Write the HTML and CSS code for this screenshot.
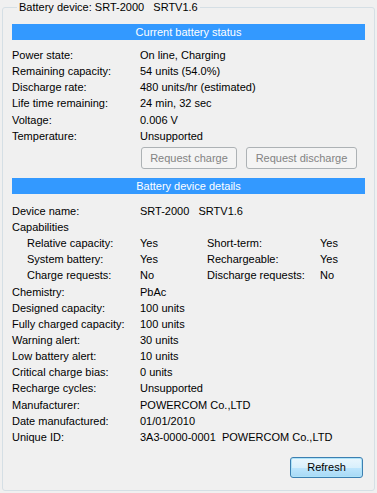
FILE: index.html
```html
<!DOCTYPE html>
<html lang="en">
<head>
    <meta charset="UTF-8">
    <title>Battery device</title>
    <link rel="stylesheet" href="styles.css">
</head>
<body>
    <fieldset class="device-box">
        <legend>Battery device: SRT-2000&nbsp;&nbsp;&nbsp;SRTV1.6</legend>

        <div class="section-title">Current battery status</div>
        <div class="rows status-rows">
            <span>Power state:</span><span>On line, Charging</span>
            <span>Remaining capacity:</span><span>54 units (54.0%)</span>
            <span>Discharge rate:</span><span>480 units/hr (estimated)</span>
            <span>Life time remaining:</span><span>24 min, 32 sec</span>
            <span>Voltage:</span><span>0.006 V</span>
            <span>Temperature:</span><span>Unsupported</span>
        </div>
        <div class="actions">
            <button class="btn" disabled>Request charge</button>
            <button class="btn btn-wide" disabled>Request discharge</button>
        </div>

        <div class="section-title">Battery device details</div>
        <div class="rows details-rows">
            <span>Device name:</span><span>SRT-2000&nbsp;&nbsp;&nbsp;SRTV1.6</span>
            <span class="full">Capabilities</span>
        </div>
        <div class="caps">
            <span>Relative capacity:</span><span>Yes</span>
            <span>Short-term:</span><span>Yes</span>
            <span>System battery:</span><span>Yes</span>
            <span>Rechargeable:</span><span>Yes</span>
            <span>Charge requests:</span><span>No</span>
            <span>Discharge requests:</span><span>No</span>
        </div>
        <div class="rows">
            <span>Chemistry:</span><span>PbAc</span>
            <span>Designed capacity:</span><span>100 units</span>
            <span>Fully charged capacity:</span><span>100 units</span>
            <span>Warning alert:</span><span>30 units</span>
            <span>Low battery alert:</span><span>10 units</span>
            <span>Critical charge bias:</span><span>0 units</span>
            <span>Recharge cycles:</span><span>Unsupported</span>
            <span>Manufacturer:</span><span>POWERCOM Co.,LTD</span>
            <span>Date manufactured:</span><span>01/01/2010</span>
            <span>Unique ID:</span><span>3A3-0000-0001&nbsp;&nbsp;POWERCOM Co.,LTD</span>
        </div>
        <div class="footer">
            <button class="btn btn-refresh">Refresh</button>
        </div>
    </fieldset>
</body>
</html>
```

FILE: styles.css
```css
* {
    box-sizing: border-box;
}

body {
    margin: 0;
    background: #f0f0f0;
    color: #000;
    font-family: "Liberation Sans", Arial, sans-serif;
    font-size: 11px;
    width: 377px;
    height: 493px;
    overflow: hidden;
}

.device-box {
    margin: 1px 2px 0 2px;
    padding: 10px 9px 12px 9px;
    border: 1px solid #d5dfe5;
    border-radius: 3px;
    height: 490px;
}

.device-box legend {
    padding: 0 2px;
    margin-left: 5px;
    line-height: 13px;
}

.section-title {
    background: #3399ff;
    color: #fff;
    text-align: center;
    height: 16px;
    line-height: 16px;
}

/* label / value pairs */
.rows {
    display: grid;
    grid-template-columns: 128px 1fr;
    grid-auto-rows: 16.15px;
    align-items: center;
}

.status-rows {
    margin-top: 7px;
}

.details-rows {
    margin-top: 9px;
}

.rows .full {
    grid-column: 1 / -1;
}

.caps {
    display: grid;
    grid-template-columns: 113px 67px 113px 1fr;
    grid-auto-rows: 16.15px;
    align-items: center;
    padding-left: 15px;
}

.actions {
    display: flex;
    gap: 9px;
    padding-left: 129px;
    margin-top: 3px;
    margin-bottom: 9px;
}

.btn {
    font-family: inherit;
    font-size: 11px;
    height: 22px;
    padding: 0 8px;
    border: 1px solid #adadad;
    border-radius: 3px;
    background: linear-gradient(#f2f2f2 0%, #ebebeb 50%, #dddddd 51%, #cfcfcf 100%);
    color: #000;
}

.btn:disabled {
    background: #f4f4f4;
    border-color: #adb2b5;
    color: #838383;
    width: 96px;
}

.btn-wide:disabled {
    width: 111px;
}

.footer {
    display: flex;
    justify-content: flex-end;
    margin-top: 12px;
    padding-right: 2px;
}

.btn-refresh {
    width: 73px;
    height: 21px;
    border-color: #3c7fb1;
    background: linear-gradient(#eaf6fd 0%, #d9f0fc 50%, #bee6fd 51%, #a7d9f5 100%);
    box-shadow: inset 0 0 0 1px #aee3f8;
}
```
